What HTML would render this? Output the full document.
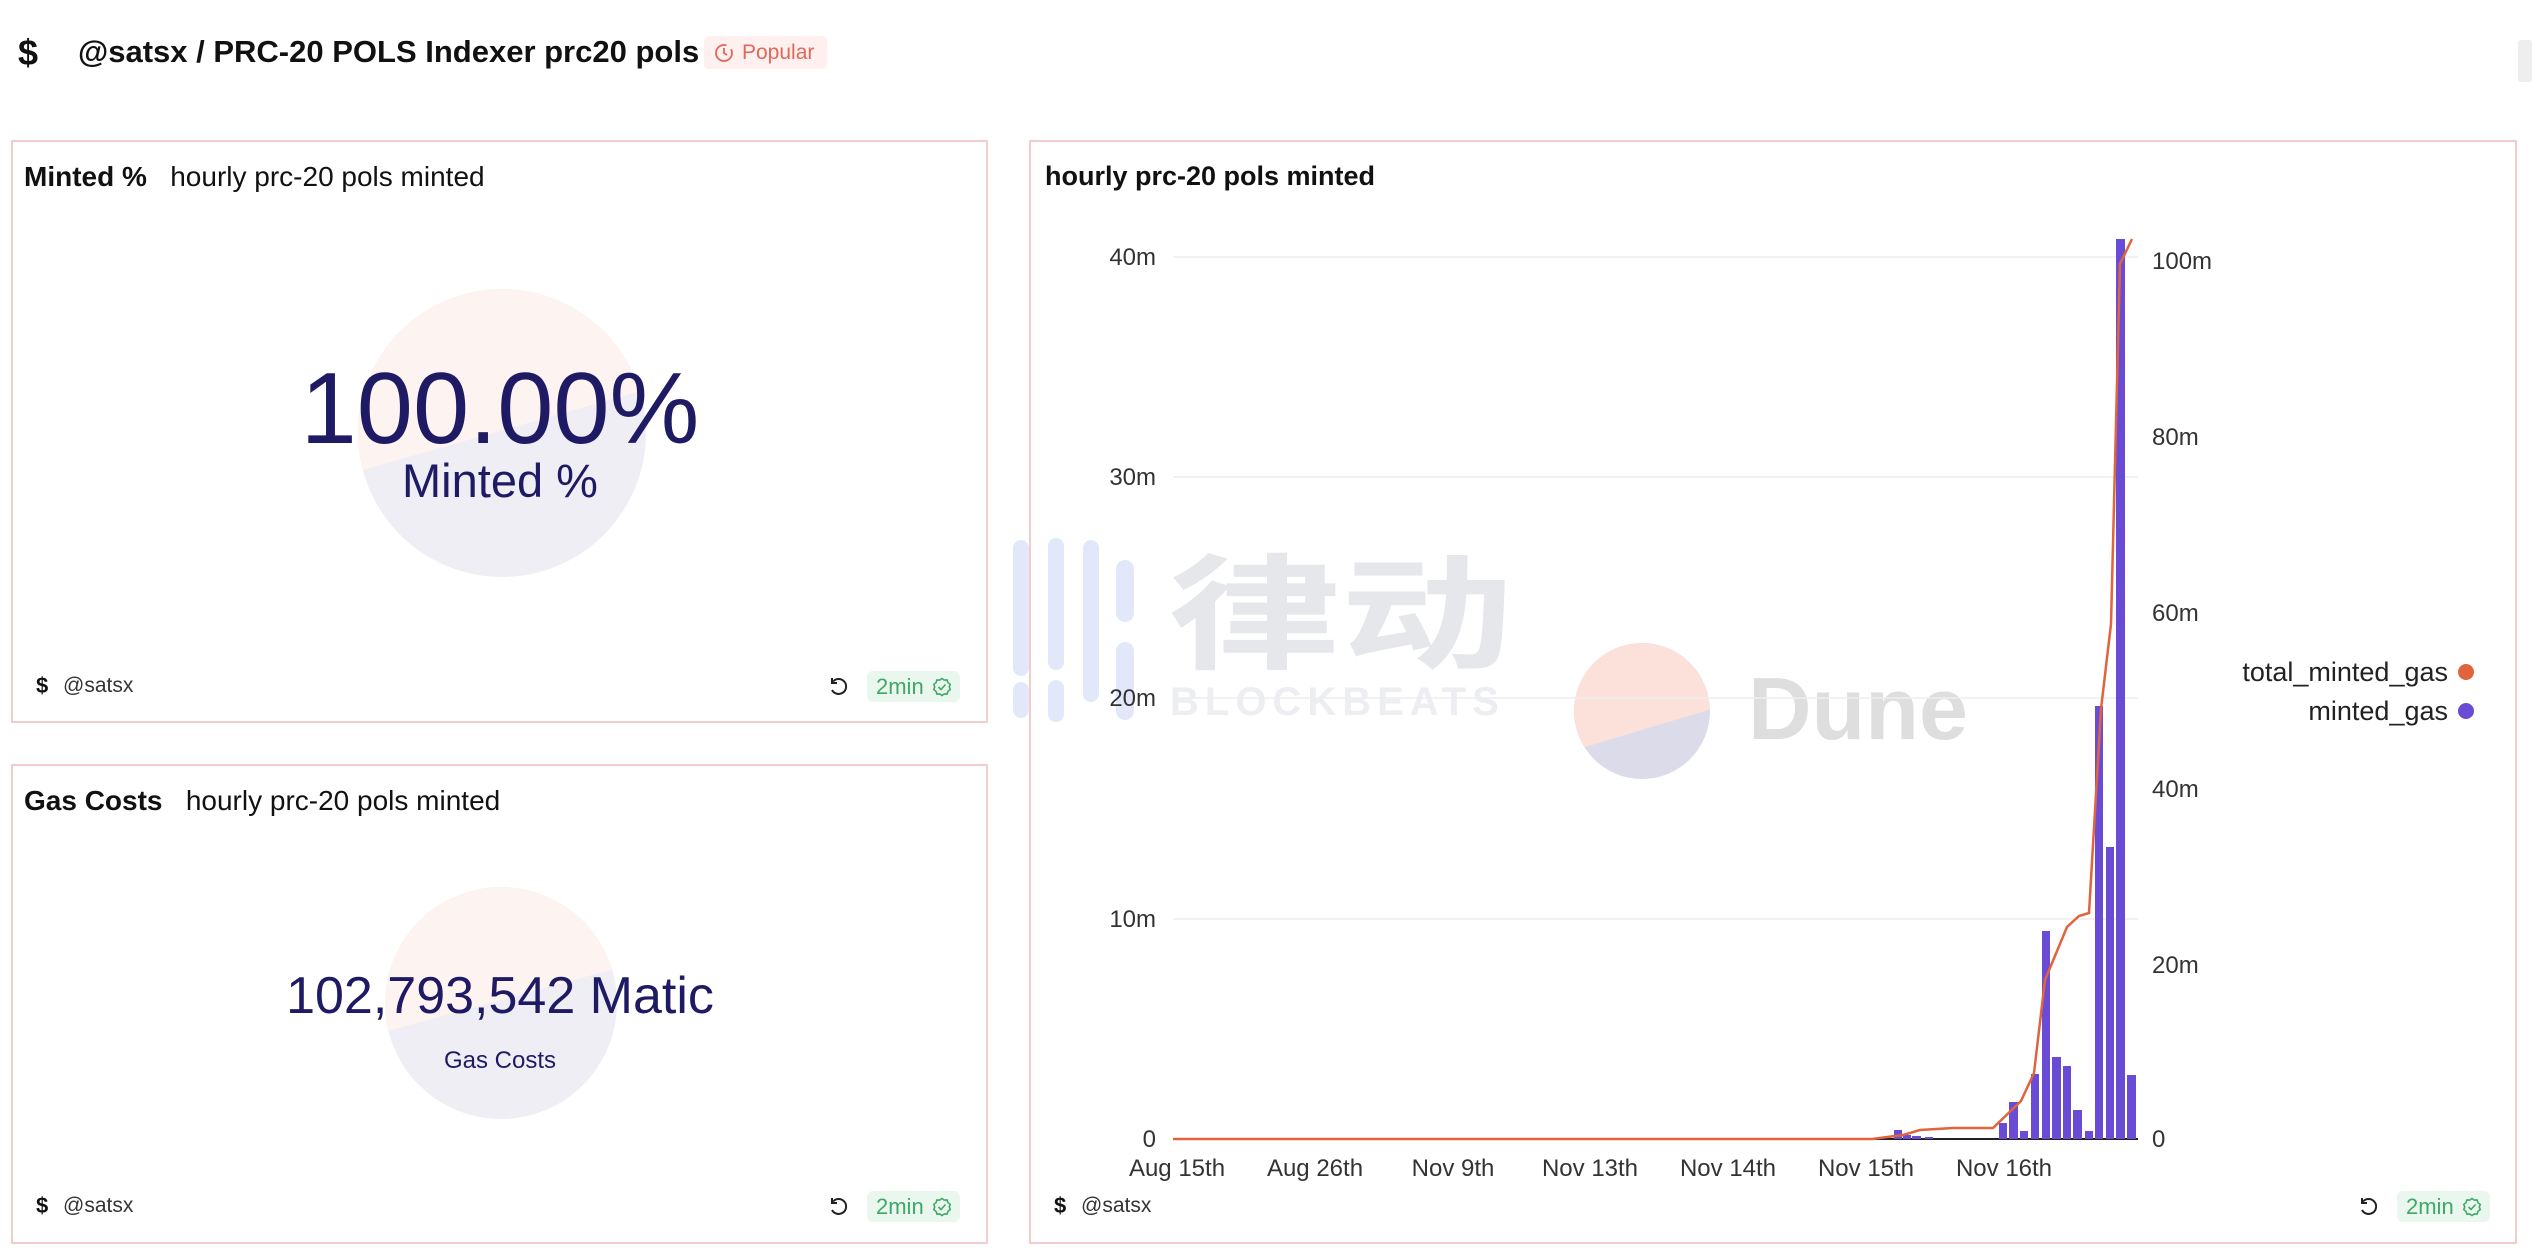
<!DOCTYPE html>
<html><head><meta charset="utf-8"><style>
*{margin:0;padding:0;box-sizing:border-box}
body{width:2532px;height:1258px;background:#fff;position:relative;overflow:hidden;font-family:"Liberation Sans","Noto Sans CJK SC",sans-serif;color:#111}
.a{position:absolute;white-space:nowrap}
.card{position:absolute;border:2px solid #f3cccc;background:#fff}
.badge{position:absolute;background:#eaf7ee;border-radius:6px;color:#3fa866;font-size:22px;line-height:31px;padding:0 36px 0 9px;height:31px}
.badge svg{position:absolute;right:8px;top:6px}
</style></head><body>
<div class="a" style="left:18px;top:32px;font-size:36px;font-weight:bold">$</div>
<div class="a" style="left:78px;top:34px;font-size:31px;font-weight:bold">@satsx / PRC-20 POLS Indexer prc20 pols</div>
<div class="a" style="left:704px;top:36px;width:123px;height:33px;background:#fdf0ee;border-radius:5px;color:#e0685a;font-size:21px;line-height:33px;padding-left:38px">Popular</div>
<svg class="a" style="left:714px;top:43px" width="20" height="20" viewBox="0 0 20 20" fill="none" stroke="#e0685a" stroke-width="1.8"><circle cx="10" cy="10" r="8" stroke-dasharray="40 6"/><path d="M10 5v5l3 2"/></svg>
<div class="a" style="left:2518px;top:40px;width:14px;height:42px;background:#eee;border-radius:3px"></div>

<!-- card1 -->
<div class="card" style="left:11px;top:140px;width:977px;height:583px"></div>
<div class="a" style="left:24px;top:161px;font-size:28px"><b>Minted %</b>&nbsp;&nbsp; hourly prc-20 pols minted</div>
<svg class="a" style="left:356px;top:287px" width="292" height="292" viewBox="-146 -146 292 292"><defs><clipPath id="c1"><circle r="144"/></clipPath></defs><g clip-path="url(#c1)"><rect x="-150" y="-150" width="300" height="300" fill="#efeef5"/><polygon points="-150,-150 150,-150 150,-45 -150,40" fill="#fdf3f0"/></g></svg>
<div class="a" style="left:0;width:1000px;text-align:center;top:352px;font-size:101px;color:#1e1a63;line-height:115px">100.00%</div>
<div class="a" style="left:0;width:1000px;text-align:center;top:453px;font-size:47px;color:#1e1a63">Minted %</div>
<div class="a" style="left:36px;top:673px;font-size:22px;font-weight:bold">$</div>
<div class="a" style="left:63px;top:674px;font-size:21px;color:#333">@satsx</div>
<svg class="a" style="left:828px;top:676px" width="22" height="22" viewBox="0 0 22 22" fill="none" stroke="#222" stroke-width="2"><path d="M5 5.5A7.5 7.5 0 1 1 4 14"/><path d="M4 2v5h5"/></svg>
<div class="badge" style="left:867px;top:671px">2min<svg width="20" height="20" viewBox="0 0 20 20" fill="none" stroke="#3fa866" stroke-width="1.6"><path d="M10 1.5l2.3 1.6 2.8-.1.9 2.7 2.2 1.7-.9 2.6.9 2.6-2.2 1.7-.9 2.7-2.8-.1L10 18.5l-2.3-1.6-2.8.1-.9-2.7-2.2-1.7.9-2.6-.9-2.6 2.2-1.7.9-2.7 2.8.1z"/><path d="M6.5 10l2.5 2.5 4.5-5"/></svg></div>

<!-- card2 -->
<div class="card" style="left:11px;top:764px;width:977px;height:480px"></div>
<div class="a" style="left:24px;top:785px;font-size:28px"><b>Gas Costs</b>&nbsp;&nbsp; hourly prc-20 pols minted</div>
<svg class="a" style="left:383px;top:885px" width="236" height="236" viewBox="-118 -118 236 236"><defs><clipPath id="c2"><circle r="116"/></clipPath></defs><g clip-path="url(#c2)"><rect x="-120" y="-120" width="240" height="240" fill="#efeef5"/><polygon points="-120,-120 120,-120 120,-36 -120,30" fill="#fdf3f0"/></g></svg>
<div class="a" style="left:0;width:1000px;text-align:center;top:966px;font-size:52px;color:#1e1a63">102,793,542 Matic</div>
<div class="a" style="left:0;width:1000px;text-align:center;top:1047px;font-size:24px;color:#1e1a63">Gas Costs</div>
<div class="a" style="left:36px;top:1193px;font-size:22px;font-weight:bold">$</div>
<div class="a" style="left:63px;top:1194px;font-size:21px;color:#333">@satsx</div>
<svg class="a" style="left:828px;top:1196px" width="22" height="22" viewBox="0 0 22 22" fill="none" stroke="#222" stroke-width="2"><path d="M5 5.5A7.5 7.5 0 1 1 4 14"/><path d="M4 2v5h5"/></svg>
<div class="badge" style="left:867px;top:1191px">2min<svg width="20" height="20" viewBox="0 0 20 20" fill="none" stroke="#3fa866" stroke-width="1.6"><path d="M10 1.5l2.3 1.6 2.8-.1.9 2.7 2.2 1.7-.9 2.6.9 2.6-2.2 1.7-.9 2.7-2.8-.1L10 18.5l-2.3-1.6-2.8.1-.9-2.7-2.2-1.7.9-2.6-.9-2.6 2.2-1.7.9-2.7 2.8.1z"/><path d="M6.5 10l2.5 2.5 4.5-5"/></svg></div>

<!-- card3 -->
<div class="card" style="left:1029px;top:140px;width:1488px;height:1104px"></div>
<div class="a" style="left:1045px;top:161px;font-size:27px;font-weight:bold">hourly prc-20 pols minted</div>

<!-- watermark -->
<svg class="a" style="left:1005px;top:530px" width="140" height="200" fill="#e2e8fa">
<rect x="8" y="10" width="16" height="136" rx="8"/><rect x="8" y="152" width="16" height="36" rx="8"/>
<rect x="43" y="8" width="16" height="132" rx="8"/><rect x="43" y="150" width="16" height="42" rx="8"/>
<rect x="78" y="10" width="16" height="162" rx="8"/>
<rect x="111" y="30" width="18" height="62" rx="9"/><rect x="111" y="112" width="18" height="78" rx="9"/>
</svg>
<div class="a" style="left:1168px;top:540px;font-size:125px;line-height:130px;font-weight:bold;color:#e5e7ea;font-family:'Noto Sans CJK SC',sans-serif;transform:scaleX(1.38);transform-origin:left top">律动</div>
<div class="a" style="left:1170px;top:680px;font-size:40px;font-weight:bold;color:#eceef1;letter-spacing:6px">BLOCKBEATS</div>
<svg class="a" style="left:1572px;top:641px" width="140" height="140" viewBox="-70 -70 140 140"><defs><clipPath id="c3"><circle r="68"/></clipPath></defs><g clip-path="url(#c3)"><rect x="-70" y="-70" width="140" height="140" fill="#dcdbe9"/><polygon points="-70,-70 70,-70 70,-2 -70,40" fill="#fbe1d9"/></g></svg>
<div class="a" style="left:1748px;top:658px;font-size:88px;font-weight:bold;color:#dedede">Dune</div>

<svg class="a" style="left:0;top:0" width="2532" height="1258">
<g stroke="#eee" stroke-width="1.5"><line x1="1173" y1="257" x2="2138" y2="257"/><line x1="1173" y1="477" x2="2138" y2="477"/><line x1="1173" y1="698" x2="2138" y2="698"/><line x1="1173" y1="919" x2="2138" y2="919"/></g>
<line x1="1173" y1="1139" x2="2138" y2="1139" stroke="#222" stroke-width="2"/>
<g font-family="Liberation Sans" font-size="24" fill="#333">
<g text-anchor="end"><text x="1156" y="265">40m</text><text x="1156" y="485">30m</text><text x="1156" y="706">20m</text><text x="1156" y="927">10m</text><text x="1156" y="1147">0</text></g>
<text x="2152" y="269">100m</text><text x="2152" y="445">80m</text><text x="2152" y="621">60m</text><text x="2152" y="797">40m</text><text x="2152" y="973">20m</text><text x="2152" y="1147">0</text>
<g text-anchor="middle"><text x="1177" y="1176">Aug 15th</text><text x="1315" y="1176">Aug 26th</text><text x="1453" y="1176">Nov 9th</text><text x="1590" y="1176">Nov 13th</text><text x="1728" y="1176">Nov 14th</text><text x="1866" y="1176">Nov 15th</text><text x="2004" y="1176">Nov 16th</text></g>
<g text-anchor="end" font-size="27" fill="#222"><text x="2448" y="681">total_minted_gas</text><text x="2448" y="720">minted_gas</text></g>
</g>
<circle cx="2466" cy="672" r="8" fill="#e0643c"/><circle cx="2466" cy="711" r="8" fill="#6a4bd6"/>
<g fill="#6a4bd6">
<rect x="1894" y="1130" width="8" height="9"/><rect x="1903" y="1135" width="8" height="4"/><rect x="1912" y="1136" width="9" height="3"/><rect x="1925" y="1137" width="8" height="2"/>
<rect x="1999" y="1123" width="8" height="16"/><rect x="2009" y="1102" width="9" height="37"/><rect x="2020" y="1131" width="8" height="8"/><rect x="2031" y="1074" width="8" height="65"/><rect x="2042" y="931" width="8" height="208"/><rect x="2052" y="1057" width="9" height="82"/><rect x="2063" y="1066" width="8" height="73"/><rect x="2073" y="1110" width="9" height="29"/><rect x="2085" y="1131" width="8" height="8"/><rect x="2095" y="706" width="8" height="433"/><rect x="2106" y="847" width="8" height="292"/><rect x="2116" y="239" width="9" height="900"/><rect x="2127" y="1075" width="9" height="64"/>
</g>
<polyline fill="none" stroke="#e0643c" stroke-width="2.5" points="1173,1139 1872,1139 1903,1135 1920,1130 1953,1128 1993,1128 2021,1101 2034,1073 2045,980 2067,927 2079,916 2089,913 2101,709 2111,624 2120,264 2132,239"/>
</svg>
<div class="a" style="left:1054px;top:1193px;font-size:22px;font-weight:bold">$</div>
<div class="a" style="left:1081px;top:1194px;font-size:21px;color:#333">@satsx</div>
<svg class="a" style="left:2358px;top:1196px" width="22" height="22" viewBox="0 0 22 22" fill="none" stroke="#222" stroke-width="2"><path d="M5 5.5A7.5 7.5 0 1 1 4 14"/><path d="M4 2v5h5"/></svg>
<div class="badge" style="left:2397px;top:1191px">2min<svg width="20" height="20" viewBox="0 0 20 20" fill="none" stroke="#3fa866" stroke-width="1.6"><path d="M10 1.5l2.3 1.6 2.8-.1.9 2.7 2.2 1.7-.9 2.6.9 2.6-2.2 1.7-.9 2.7-2.8-.1L10 18.5l-2.3-1.6-2.8.1-.9-2.7-2.2-1.7.9-2.6-.9-2.6 2.2-1.7.9-2.7 2.8.1z"/><path d="M6.5 10l2.5 2.5 4.5-5"/></svg></div>
</body></html>
